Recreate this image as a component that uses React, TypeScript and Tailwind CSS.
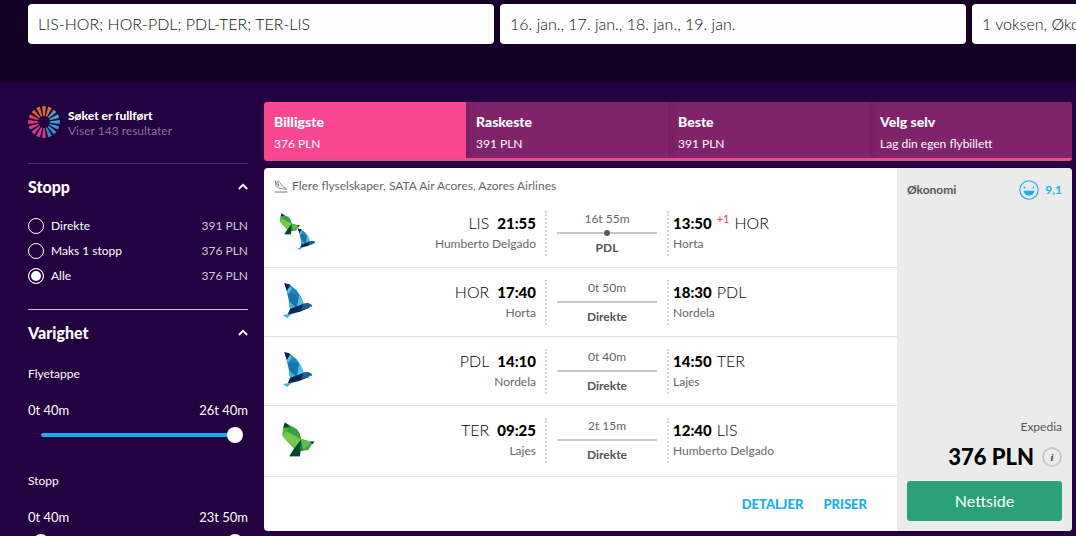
import React from "react";

type Leg = {
  from: string;
  fromName: string;
  depart: string;
  to: string;
  toName: string;
  arrive: string;
  plusDay?: string;
  duration: string;
  stop?: string;
  logo: "both" | "blue" | "green";
};

const legs: Leg[] = [
  { from: "LIS", fromName: "Humberto Delgado", depart: "21:55", to: "HOR", toName: "Horta", arrive: "13:50", plusDay: "+1", duration: "16t 55m", stop: "PDL", logo: "both" },
  { from: "HOR", fromName: "Horta", depart: "17:40", to: "PDL", toName: "Nordela", arrive: "18:30", duration: "0t 50m", logo: "blue" },
  { from: "PDL", fromName: "Nordela", depart: "14:10", to: "TER", toName: "Lajes", arrive: "14:50", duration: "0t 40m", logo: "blue" },
  { from: "TER", fromName: "Lajes", depart: "09:25", to: "LIS", toName: "Humberto Delgado", arrive: "12:40", duration: "2t 15m", logo: "green" },
];

const tabs = [
  { title: "Billigste", sub: "376 PLN" },
  { title: "Raskeste", sub: "391 PLN" },
  { title: "Beste", sub: "391 PLN" },
  { title: "Velg selv", sub: "Lag din egen flybillett" },
];

const stops = [
  { label: "Direkte", price: "391 PLN" },
  { label: "Maks 1 stopp", price: "376 PLN" },
  { label: "Alle", price: "376 PLN" },
];

function BlueBird() {
  return (
    <g>
      <path d="M61 43 L77 47 L97 64 L110 82 L119 104 L100 122 L78 120 L74 92 L68 66 Z" fill="#1b7fb8" />
      <path d="M77 48 L97 64 L108 80 L70 70 Z" fill="#1f86bd" />
      <path d="M70 70 L108 80 L100 118 L79 98 Z" fill="#1874ab" />
      <path d="M61 43 L77 46 L76 54 L69 67 Z" fill="#0b2148" />
      <path d="M77 53 L84 58 L72 76 L68 67 Z" fill="#5bbfe2" />
      <path d="M106 76 L114 90 L119 104 L98 118 Z" fill="#52c0ea" />
      <path d="M76 97 L98 118 L78 120 Z" fill="#3fb0de" />
      <path d="M78 120 L119 104 L132 103 L142 108 L134 117 L108 128 L84 134 L70 139 Z" fill="#0c2456" />
      <path d="M117 105 L132 102 L143 107 L145 115 L138 112 L131 119 L112 122 Z" fill="#1b5f98" />
      <path d="M56 138 L84 134 L70 147 Z" fill="#38b6e4" />
    </g>
  );
}

function GreenBird() {
  return (
    <g>
      <path d="M62 41 L72 46 L94 58 L105 70 L112 90 L140 98 L146 103 L133 123 L110 126 L107 142 L76 142 L90 118 L74 102 L56 82 L57 58 Z" fill="#45a842" />
      <path d="M63 40 L82 57 L58 56 Z" fill="#0a3b2a" />
      <path d="M58 56 L82 55 L66 69 L55 80 Z" fill="#4fb046" />
      <path d="M82 53 L98 61 L106 72 L111 92 L66 68 Z" fill="#389f44" />
      <path d="M55 80 L67 67 L111 91 L94 116 L74 102 Z" fill="#74c94e" />
      <path d="M111 90 L143 98 L116 124 Z" fill="#5cbe48" />
      <path d="M137 98 L151 97 L146 106 Z" fill="#0b2f2a" />
      <path d="M111 92 L108 142 L76 142 L94 114 Z" fill="#08442f" />
      <path d="M111 98 L118 124 L110 127 Z" fill="#238a3d" />
    </g>
  );
}

function AirlineLogo({ kind }: { kind: Leg["logo"] }) {
  if (kind === "blue") {
    return (
      <svg viewBox="48 33 120 120" className="size-10" aria-hidden="true">
        <BlueBird />
      </svg>
    );
  }
  if (kind === "green") {
    return (
      <svg viewBox="48 27 120 120" className="size-10" aria-hidden="true">
        <GreenBird />
      </svg>
    );
  }
  return (
    <svg viewBox="0 0 120 120" className="size-10" aria-hidden="true">
      <g transform="translate(-34 -18) scale(0.62)">
        <GreenBird />
      </g>
      <g transform="translate(16 26) scale(0.62)">
        <BlueBird />
      </g>
    </svg>
  );
}

const petals = ["#df7033", "#d9693a", "#3f9fcb", "#4aa6d2", "#3f9fd0", "#3a97cc", "#3a93c8", "#3989bd", "#cb3d8b", "#d03b8c", "#d43a8a", "#d53c86", "#d63c80", "#d4493f", "#d95a36", "#dd6633"];

function Burst() {
  return (
    <svg viewBox="-16 -16 32 32" className="size-8" aria-hidden="true">
      {petals.map((color, i) => (
        <path key={i} d="M-0.7 -6 L-1.9 -15.6 Q0 -16.2 1.9 -15.6 L0.7 -6 Z" fill={color} transform={`rotate(${i * 22.5})`} />
      ))}
    </svg>
  );
}

function Chevron() {
  return (
    <svg viewBox="0 0 10 8" className="h-2 w-[10px]" fill="none" stroke="white" strokeWidth="1.8" aria-hidden="true">
      <path d="M0.8 6 L5 1.8 L9.2 6" />
    </svg>
  );
}

function LegRow({ leg }: { leg: Leg }) {
  return (
    <li className="grid h-[69px] grid-cols-[283px_120px_1fr] border-b border-[#e0e0e0] py-3 last:h-[71px] last:pb-[14px]">
      <div className="flex justify-between border-r-2 border-dotted border-[#d5d5d5] pr-[9px] pl-4">
        <AirlineLogo kind={leg.logo} />
        <div className="text-right">
          <div className="flex items-center justify-end gap-2 text-base leading-6">
            <span className="font-light">{leg.from}</span>
            <span className="text-[15px] font-black">{leg.depart}</span>
          </div>
          <div className="text-xs leading-[18px] text-[#666]">{leg.fromName}</div>
        </div>
      </div>
      <div className="flex flex-col items-center px-[10px] text-xs text-[#666]">
        <span className="leading-4">{leg.duration}</span>
        <span className="mt-[3px] flex h-[6px] w-full items-center justify-center">
          <span className="h-[2px] flex-1 bg-[#c8c8c8]" />
          {leg.stop && <span className="size-[6px] rounded-full bg-[#5a5a5a]" />}
          <span className="h-[2px] flex-1 bg-[#c8c8c8]" />
        </span>
        <span className="mt-1 font-bold leading-4 text-[#555]">{leg.stop ?? "Direkte"}</span>
      </div>
      <div className="border-l-2 border-dotted border-[#d5d5d5] pl-1">
        <div className="flex items-center gap-[5px] text-base leading-6">
          <span className="text-[15px] font-black">{leg.arrive}</span>
          {leg.plusDay && <span className="pb-2 text-[11px] leading-4 text-[#d8435f]">{leg.plusDay}</span>}
          <span className="font-light">{leg.to}</span>
        </div>
        <div className="text-xs leading-[18px] text-[#666]">{leg.toName}</div>
      </div>
    </li>
  );
}

const thumb =
  "pointer-events-none absolute inset-0 h-4 w-full appearance-none bg-transparent [&::-webkit-slider-thumb]:pointer-events-auto [&::-webkit-slider-thumb]:size-4 [&::-webkit-slider-thumb]:appearance-none [&::-webkit-slider-thumb]:rounded-full [&::-webkit-slider-thumb]:bg-white";

function RangeFilter({ title, low, high, double }: { title: string; low: string; high: string; double?: boolean }) {
  return (
    <div className="pb-[30px]">
      <h3 className="text-xs leading-4 font-normal">{title}</h3>
      <div className="mt-5 flex justify-between text-[13px] leading-4">
        <span>{low}</span>
        <span>{high}</span>
      </div>
      <div className="relative mt-[9px] mr-[5px] ml-[5px] flex h-4 items-center px-2">
        <div className="h-1 w-full rounded-full bg-[#18aeea]" />
        {double && <input type="range" aria-label={`${title} fra`} defaultValue={0} className={thumb} />}
        <input type="range" aria-label={`${title} til`} defaultValue={100} className={thumb} />
      </div>
    </div>
  );
}

const field = "h-10 w-[466px] shrink-0 rounded-[4px] bg-white px-[10px] pb-[2px] text-base font-light text-[#111] outline-none";

export default function App() {
  return (
    <div className="flex h-screen flex-col overflow-hidden bg-[#23003f] font-['Lato','Liberation_Sans',sans-serif] text-black">
      <header className="flex h-[82px] shrink-0 gap-[6px] overflow-hidden bg-[#150025] pt-1 pl-7">
        <input aria-label="Reiserute" defaultValue="LIS-HOR; HOR-PDL; PDL-TER; TER-LIS" className={field} />
        <input aria-label="Datoer" defaultValue="16. jan., 17. jan., 18. jan., 19. jan." className={field} />
        <input aria-label="Reisende" defaultValue="1 voksen, Økonomi" className={field} />
      </header>
      <div className="flex gap-4 pt-5 pr-1 pl-7">
        <aside className="w-[220px] shrink-0 text-white">
          <div className="flex h-[61px] gap-2 pt-1">
            <Burst />
            <div className="pt-[2px] text-xs leading-[15px]">
              <p className="font-black">Søket er fullført</p>
              <p className="text-[#8b7599]">Viser 143 resultater</p>
            </div>
          </div>
          <section className="h-[146px] border-t border-[#4d3365] pt-[11px]">
            <h2>
              <button className="flex w-full items-center justify-between text-base leading-6 font-black">
                Stopp
                <Chevron />
              </button>
            </h2>
            <div className="mt-[14px] flex flex-col text-xs">
              {stops.map((s) => (
                <label key={s.label} className="flex h-[25px] items-center gap-[7px]">
                  <input
                    type="radio"
                    name="stops"
                    defaultChecked={s.label === "Alle"}
                    className="size-4 appearance-none rounded-full border border-white checked:bg-white checked:shadow-[inset_0_0_0_2px_#23003f]"
                  />
                  <span>{s.label}</span>
                  <span className="ml-auto text-[#d3cad9]">{s.price}</span>
                </label>
              ))}
            </div>
          </section>
          <section className="border-t border-[#d3cad9] pt-[11px]">
            <h2>
              <button className="flex w-full items-center justify-between text-base leading-6 font-black">
                Varighet
                <Chevron />
              </button>
            </h2>
            <div className="mt-[21px]">
              <RangeFilter title="Flyetappe" low="0t 40m" high="26t 40m" />
              <RangeFilter title="Stopp" low="0t 40m" high="23t 50m" double />
            </div>
          </section>
        </aside>
        <main className="min-w-0 flex-1">
          <div role="tablist" className="grid grid-cols-4 overflow-hidden rounded-[3px] border-b-[3px] border-[#ea4c91] text-white">
            {tabs.map((t, i) => (
              <button
                key={t.title}
                role="tab"
                aria-selected={i === 0}
                className={`h-14 px-[10px] pt-[3px] text-left ${i === 0 ? "bg-[#f9488f]" : "bg-[#80236a] bg-linear-to-r from-[#762060] to-[#80236a] to-5%"}`}
              >
                <span className="block text-sm leading-5 font-black">{t.title}</span>
                <span className="mt-1 block text-xs leading-4">{t.sub}</span>
              </button>
            ))}
          </div>
          <article className="mt-[7px] flex overflow-hidden rounded-[4px] bg-white">
            <div className="flex-1">
              <div className="flex h-[31px] items-center gap-1 pt-1 pl-[10px] text-xs text-[#666]">
                <svg viewBox="0 0 14 14" className="size-[14px]" fill="none" stroke="#777" strokeLinejoin="round" aria-hidden="true">
                  <path d="M1 13 H13.5" />
                  <path d="M1.3 1.5 L1.8 6.8 L5 9.2 L12.5 10.5 Q12.2 8.6 9.2 8 L4.6 2 L3.4 2.2 L5 7 L3.2 6 Z" strokeWidth="0.8" />
                </svg>
                <span>Flere flyselskaper, SATA Air Acores, Azores Airlines</span>
              </div>
              <ul>
                {legs.map((leg) => (
                  <LegRow key={leg.from} leg={leg} />
                ))}
              </ul>
              <div className="flex h-[54px] items-center justify-end gap-5 pt-px pr-[30px] text-[13px] font-black text-[#18aeea]">
                <button>DETALJER</button>
                <button>PRISER</button>
              </div>
            </div>
            <div className="flex w-[175px] shrink-0 flex-col justify-between bg-[#ecebec] p-[10px]">
              <div className="flex h-6 items-center gap-[6px] text-xs font-bold">
                <span className="flex-1 text-[#555]">Økonomi</span>
                <svg viewBox="0 0 20 20" className="size-5" aria-hidden="true">
                  <circle cx="10" cy="10" r="9.2" fill="none" stroke="#18aeea" strokeWidth="1.1" />
                  <circle cx="5.5" cy="7.5" r="0.9" fill="#18aeea" />
                  <circle cx="14.5" cy="7.5" r="0.9" fill="#18aeea" />
                  <path d="M4.5 10.8 H15.5 Q14.6 15.6 10 15.6 Q5.4 15.6 4.5 10.8 Z" fill="#18aeea" />
                </svg>
                <span className="text-[#18aeea]">9,1</span>
              </div>
              <div>
                <p className="text-right text-xs leading-4 text-[#555]">Expedia</p>
                <div className="mt-2 flex items-center justify-end gap-2">
                  <span className="text-[22px] leading-7 font-black">376 PLN</span>
                  <button aria-label="Prisinformasjon" className="flex size-5 items-center justify-center rounded-full border-2 border-[#c8c8c8] font-['Liberation_Serif',serif] text-[11px] leading-none font-bold text-[#444] italic">
                    i
                  </button>
                </div>
                <button className="mt-[10px] h-10 w-full rounded-[3px] bg-[#2ca079] text-base text-white">Nettside</button>
              </div>
            </div>
          </article>
        </main>
      </div>
    </div>
  );
}
